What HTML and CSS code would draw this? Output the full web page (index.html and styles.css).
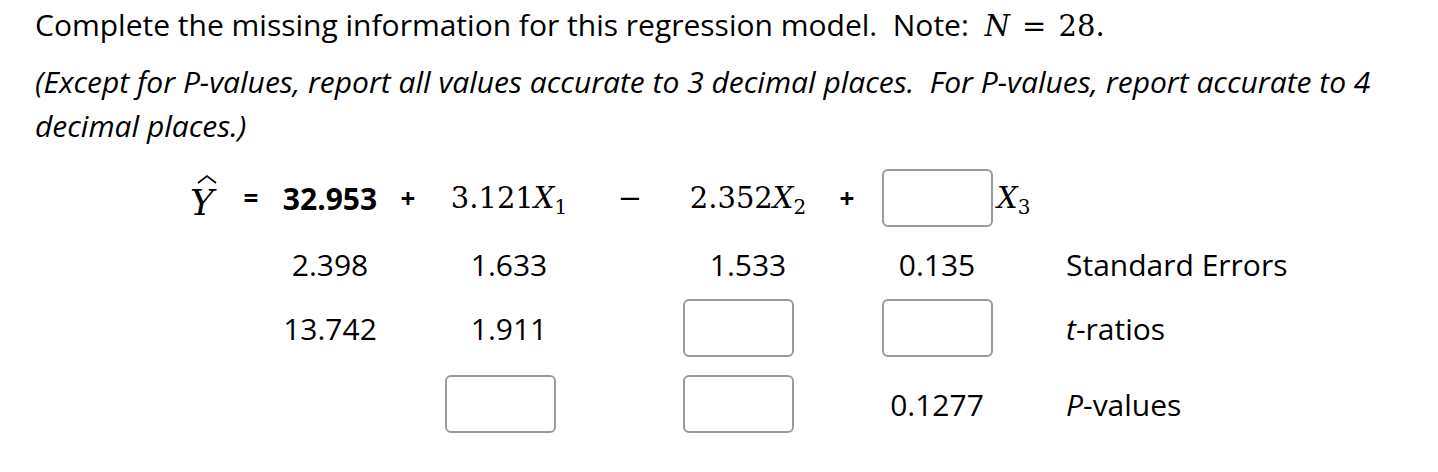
FILE: index.html
```html
<!DOCTYPE html>
<html>
<head>
<meta charset="utf-8">
<link rel="stylesheet" href="styles.css">
</head>
<body>
<div class="page">
  <p class="prompt">Complete the missing information for this regression model. &nbsp;Note: &nbsp;<span class="math"><i>N</i> <span class="rel">=</span> 28.</span></p>
  <p class="note">(Except for P-values, report all values accurate to 3 decimal places. &nbsp;For P-values, report accurate to 4 decimal places.)</p>

  <div class="model">
    <!-- row 1: equation -->
    <div class="cell"><span class="yhat"><svg class="hat" width="20" height="10" viewBox="0 0 20 10"><polyline points="1,9 10,2 19,9" fill="none" stroke="#000" stroke-width="1.7"/></svg><i class="yvar">Y</i></span></div>
    <div class="cell op">=</div>
    <div class="cell bold">32.953</div>
    <div class="cell op">+</div>
    <div class="cell"><span class="math">3.121<i>X</i><sub>1</sub></span></div>
    <div class="cell"><span class="math minus">−</span></div>
    <div class="cell"><span class="math">2.352<i>X</i><sub>2</sub></span></div>
    <div class="cell op">+</div>
    <div class="cell start"><span class="box"></span><span class="math x3"><i>X</i><sub>3</sub></span></div>
    <div class="cell"></div>

    <!-- row 2: standard errors -->
    <div class="cell"></div>
    <div class="cell"></div>
    <div class="cell">2.398</div>
    <div class="cell"></div>
    <div class="cell">1.633</div>
    <div class="cell"></div>
    <div class="cell">1.533</div>
    <div class="cell"></div>
    <div class="cell">0.135</div>
    <div class="cell label">Standard Errors</div>

    <!-- row 3: t-ratios -->
    <div class="cell"></div>
    <div class="cell"></div>
    <div class="cell">13.742</div>
    <div class="cell"></div>
    <div class="cell">1.911</div>
    <div class="cell"></div>
    <div class="cell"><span class="box shift"></span></div>
    <div class="cell"></div>
    <div class="cell"><span class="box"></span></div>
    <div class="cell label"><span><i>t</i>-ratios</span></div>

    <!-- row 4: p-values -->
    <div class="cell"></div>
    <div class="cell"></div>
    <div class="cell"></div>
    <div class="cell"></div>
    <div class="cell"><span class="box shift-a"></span></div>
    <div class="cell"></div>
    <div class="cell"><span class="box shift"></span></div>
    <div class="cell"></div>
    <div class="cell">0.1277</div>
    <div class="cell label"><span><i>P</i>-values</span></div>
  </div>
</div>
</body>
</html>
```

FILE: styles.css
```css
html, body {
  margin: 0;
  padding: 0;
  background: #ffffff;
}

body {
  font-family: "Open Sans", "Liberation Sans", sans-serif;
  color: #000000;
}

.page {
  padding: 3px 0 0 35px;
}

.prompt {
  margin: 0;
  font-size: 30px;
  line-height: 44px;
  white-space: nowrap;
}

.note {
  margin: 12px 0 0 0;
  font-size: 30px;
  line-height: 44px;
  font-style: italic;
  width: 1360px;
}

.math {
  font-family: "DejaVu Serif", "Liberation Serif", serif;
  font-size: 29px;
  font-style: normal;
  white-space: nowrap;
}

.math i {
  font-style: italic;
}

.math sub {
  font-size: 20px;
  vertical-align: -6px;
  line-height: 0;
  font-style: normal;
}

.rel {
  padding: 0 3px;
}

.model {
  margin: 21px 0 0 137px;
  display: grid;
  grid-template-columns: 60px 38px 120px 36px 166px 76px 160px 38px 142px auto;
  grid-template-rows: 66px 64px 76px 58px;
  align-items: start;
  justify-items: center;
  font-size: 30px;
}

.cell {
  height: 58px;
  display: flex;
  align-items: center;
  justify-content: center;
  white-space: nowrap;
}

.cell.start {
  justify-self: start;
  margin-left: 16px;
}

.cell.label {
  justify-self: start;
  padding-left: 58px;
}

.bold {
  font-weight: 700;
}

.op {
  font-weight: 700;
  font-size: 26px;
}

.minus {
  font-size: 29px;
}

.x3 {
  margin-left: 4px;
}

.yhat {
  display: flex;
  flex-direction: column;
  align-items: center;
  margin-top: -4px;
}

.yvar {
  font-family: "DejaVu Serif", "Liberation Serif", serif;
  font-style: italic;
  font-size: 36px;
  line-height: 32px;
}

.hat {
  display: block;
  margin-left: 9px;
  margin-bottom: 3px;
}

.box {
  display: block;
  width: 111px;
  height: 58px;
  box-sizing: border-box;
  border: 2px solid #9b9b9b;
  border-radius: 6px;
  background: #ffffff;
}

.box.shift {
  margin-right: 20px;
}

.box.shift-a {
  margin-right: 18px;
}
```
